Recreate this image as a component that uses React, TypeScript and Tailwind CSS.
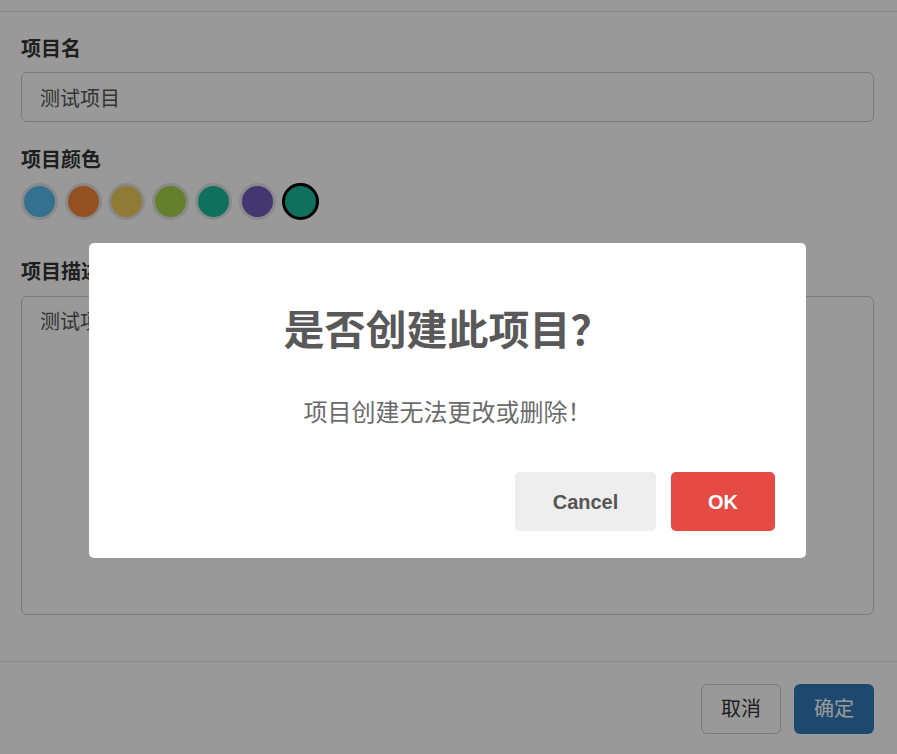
import { useState } from "react";

const FONT = { fontFamily: '"Liberation Sans", "Noto Sans CJK SC", sans-serif' };

const swatches = ["#58bdf0", "#f68536", "#eecb5b", "#a7d54b", "#1abc9c", "#6e5dbb", "#1abc9c"];

export default function App() {
  const [selected, setSelected] = useState(6);

  return (
    <div className="relative h-[754px] overflow-hidden bg-white text-[#333]" style={FONT}>
      {/* form underneath */}
      <div className="h-[12px] border-b border-[#e5e5e5]" />
      <div className="pl-[21px] pr-[23px] pt-[23px] pb-[46px] border-b border-[#e5e5e5]">
        <label className="block text-[20px] font-bold leading-[28px]">项目名</label>
        <input
          readOnly
          value="测试项目"
          className="mt-[9px] block w-full h-[50px] rounded-md border border-[#ccc] px-[18px] text-[20px] text-[#555] outline-none"
        />

        <label className="block mt-[24px] text-[20px] font-bold leading-[28px]">项目颜色</label>
        <div className="mt-[9px] flex gap-[6.5px]">
          {swatches.map((c, i) => (
            <button
              key={i}
              onClick={() => setSelected(i)}
              className={
                i === selected
                  ? "w-[37px] h-[37px] rounded-full border-[3px] border-black"
                  : "w-[37px] h-[37px] rounded-full border-[3px] border-[#e5e5e5]"
              }
              style={{ backgroundColor: c }}
            />
          ))}
        </div>

        <label className="block mt-[38px] text-[20px] font-bold leading-[28px]">项目描述</label>
        <textarea
          readOnly
          value="测试项目"
          className="mt-[10px] block w-full h-[319px] resize-none rounded-md border border-[#ccc] px-[18px] py-[10px] text-[20px] text-[#555] outline-none"
        />
      </div>
      <div className="flex justify-end gap-[13px] pt-[22px] pr-[23px]">
        <button className="w-[80px] h-[50px] rounded-md border border-[#ccc] bg-white text-[20px] text-[#333]">取消</button>
        <button className="w-[80px] h-[50px] rounded-md bg-[#337ab7] text-[20px] text-white">确定</button>
      </div>

      {/* confirm dialog */}
      <div className="absolute inset-0 bg-black/40 flex justify-center items-start pt-[243px] pr-[2px]">
        <div className="w-[717px] h-[315px] rounded-[5px] bg-white flex flex-col">
          <h2 className="mt-[63px] text-center text-[41px] font-bold leading-[50px] text-[#595959]">是否创建此项目？</h2>
          <p className="mt-[41px] text-center text-[24px] leading-[32px] text-[#6b6b6b]">项目创建无法更改或删除！</p>
          <div className="mt-[43px] flex justify-end gap-[15px] pr-[31px]">
            <button className="h-[59px] w-[141px] rounded-[5px] bg-[#eeeeee] text-[20px] font-bold text-[#555]">Cancel</button>
            <button className="h-[59px] w-[104px] rounded-[5px] bg-[#e64a44] text-[20px] font-bold text-white">OK</button>
          </div>
        </div>
      </div>
    </div>
  );
}
